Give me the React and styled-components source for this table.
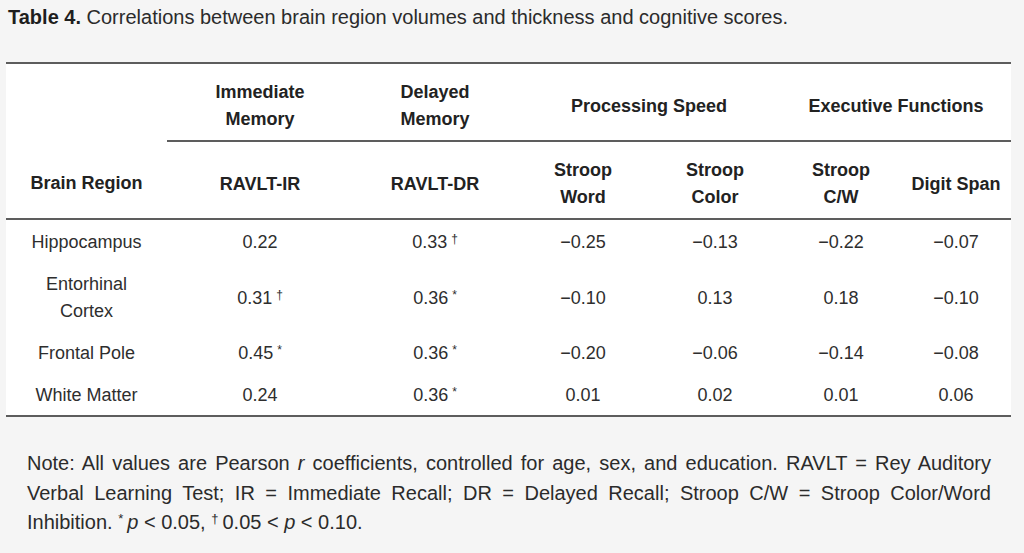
import React from "react";
import styled, { createGlobalStyle } from "styled-components";

const Global = createGlobalStyle`
  html, body { margin: 0; padding: 0; background: #f5f5f5; }
  body { font-family: "Liberation Sans", Arial, Helvetica, sans-serif; color: #2b2b2b; }
`;

const Page = styled.div`
  width: 1024px;
  height: 553px;
  background: #f5f5f5;
  overflow: hidden;
`;

const Title = styled.div`
  padding: 6px 0 0 8px;
  font-size: 20px;
  line-height: 22px;
  color: #2b2b2b;
  b { color: #1e1e1e; }
`;

const Table = styled.table`
  margin: 34px 0 0 6px;
  width: 1005px;
  border-collapse: collapse;
  background: #fff;
  border-top: 2px solid #5d5d5d;
  border-bottom: 2px solid #5d5d5d;
  table-layout: fixed;
  font-size: 18px;
  line-height: 27px;
`;

const Th = styled.th`
  padding: 15px 4px 7px;
  font-weight: bold;
  color: #222;
  text-align: center;
  vertical-align: middle;
  border-bottom: ${(p) => (p.$rule ? "2px solid #5d5d5d" : "none")};
`;

const Td = styled.td`
  padding: 9px 4px 6px;
  text-align: center;
  vertical-align: middle;
  color: #2e2e2e;
`;

const Mark = styled.sup`
  font-size: 12px;
  line-height: 0;
  vertical-align: 5px;
  margin-left: 4px;
`;

const Note = styled.p`
  margin: 32px 0 0 27px;
  width: 964px;
  font-size: 20px;
  line-height: 29.5px;
  text-align: justify;
  color: #2b2b2b;
`;

const NoteMark = styled.sup`
  font-size: 13px;
  line-height: 0;
  vertical-align: 6px;
  margin-right: 4px;
`;

const cols = [161, 186, 164, 132, 132, 120, 110];

const rows = [
  ["Hippocampus", ["0.22"], ["0.33", "†"], "−0.25", "−0.13", "−0.22", "−0.07"],
  [["Entorhinal", "Cortex"], ["0.31", "†"], ["0.36", "*"], "−0.10", "0.13", "0.18", "−0.10"],
  ["Frontal Pole", ["0.45", "*"], ["0.36", "*"], "−0.20", "−0.06", "−0.14", "−0.08"],
  ["White Matter", ["0.24"], ["0.36", "*"], "0.01", "0.02", "0.01", "0.06"],
];

const Value = ({ v }) =>
  Array.isArray(v) ? (
    <>
      {v[0]}
      {v[1] && <Mark>{v[1]}</Mark>}
    </>
  ) : (
    v
  );

export default function App() {
  return (
    <Page>
      <Global />
      <Title>
        <b>Table 4.</b> Correlations between brain region volumes and thickness and cognitive scores.
      </Title>
      <Table>
        <colgroup>
          {cols.map((w, i) => (
            <col key={i} style={{ width: w }} />
          ))}
        </colgroup>
        <thead>
          <tr>
            <Th />
            <Th $rule>
              Immediate
              <br />
              Memory
            </Th>
            <Th $rule>
              Delayed
              <br />
              Memory
            </Th>
            <Th $rule colSpan={2}>Processing Speed</Th>
            <Th $rule colSpan={2}>Executive Functions</Th>
          </tr>
          <tr>
            <Th $rule>Brain Region</Th>
            <Th $rule>RAVLT-IR</Th>
            <Th $rule>RAVLT-DR</Th>
            <Th $rule>
              Stroop
              <br />
              Word
            </Th>
            <Th $rule>
              Stroop
              <br />
              Color
            </Th>
            <Th $rule>
              Stroop
              <br />
              C/W
            </Th>
            <Th $rule>Digit Span</Th>
          </tr>
        </thead>
        <tbody>
          {rows.map((r, i) => (
            <tr key={i}>
              <Td>
                {Array.isArray(r[0]) ? (
                  <>
                    {r[0][0]}
                    <br />
                    {r[0][1]}
                  </>
                ) : (
                  r[0]
                )}
              </Td>
              <Td>
                <Value v={r[1]} />
              </Td>
              <Td>
                <Value v={r[2]} />
              </Td>
              {r.slice(3).map((c, j) => (
                <Td key={j}>{c}</Td>
              ))}
            </tr>
          ))}
        </tbody>
      </Table>
      <Note>
        Note: All values are Pearson <i>r</i> coefficients, controlled for age, sex, and education. RAVLT = Rey Auditory
        Verbal Learning Test; IR = Immediate Recall; DR = Delayed Recall; Stroop C/W = Stroop Color/Word Inhibition.{" "}
        <NoteMark>*</NoteMark>
        <i>p</i> &lt; 0.05, <NoteMark>†</NoteMark>0.05 &lt; <i>p</i> &lt; 0.10.
      </Note>
    </Page>
  );
}
